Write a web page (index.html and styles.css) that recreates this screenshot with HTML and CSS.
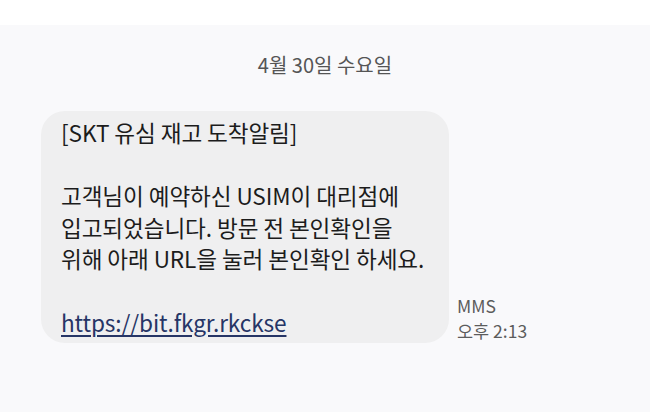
FILE: index.html
```html
<!DOCTYPE html>
<html>
<head>
    <title>메시지</title>
    <link rel="stylesheet" href="styles.css">
</head>
<body>
    <div class="status-strip"></div>

    <div class="thread">
        <div class="date-label">4월 30일 수요일</div>

        <div class="message-row">
            <div class="bubble">
                <p class="title">[SKT 유심 재고 도착알림]</p>
                <p>고객님이 예약하신 USIM이 대리점에<br>입고되었습니다. 방문 전 본인확인을<br>위해 아래 URL을 눌러 본인확인 하세요.</p>
                <p><a class="link" href="#">https://bit.fkgr.rkckse</a></p>
            </div>
            <div class="meta">
                <span>MMS</span>
                <span>오후 2:13</span>
            </div>
        </div>
    </div>
</body>
</html>
```

FILE: styles.css
```css
body {
    margin: 0;
    background-color: #f9f9fb;
    font-family: "Noto Sans CJK KR", "Noto Sans", sans-serif;
    color: #1c1c1c;
}

.status-strip {
    height: 25px;
    background-color: #ffffff;
}

.thread {
    padding-bottom: 60px;
}

.date-label {
    text-align: center;
    font-size: 20px;
    color: #555555;
    padding-top: 23px;
    height: 86px;
    box-sizing: border-box;
    line-height: 34px;
}

.message-row {
    display: flex;
    align-items: flex-end;
    padding-left: 41px;
}

.bubble {
    width: 408px;
    box-sizing: border-box;
    background-color: #efeff0;
    border-radius: 24px;
    padding: 6px 18px 5px 20px;
    font-size: 22.6px;
    line-height: 31.6px;
    letter-spacing: -0.1px;
}

.bubble p {
    margin: 0 0 31.6px 0;
}

.bubble p:last-child {
    margin-bottom: 0;
}

.link {
    color: #263566;
    text-decoration: underline;
    text-underline-offset: 3px;
}

.meta {
    display: flex;
    flex-direction: column;
    margin-left: 8px;
    padding-bottom: 0;
    font-size: 17.5px;
    line-height: 25px;
    color: #5c5c5c;
}
```
